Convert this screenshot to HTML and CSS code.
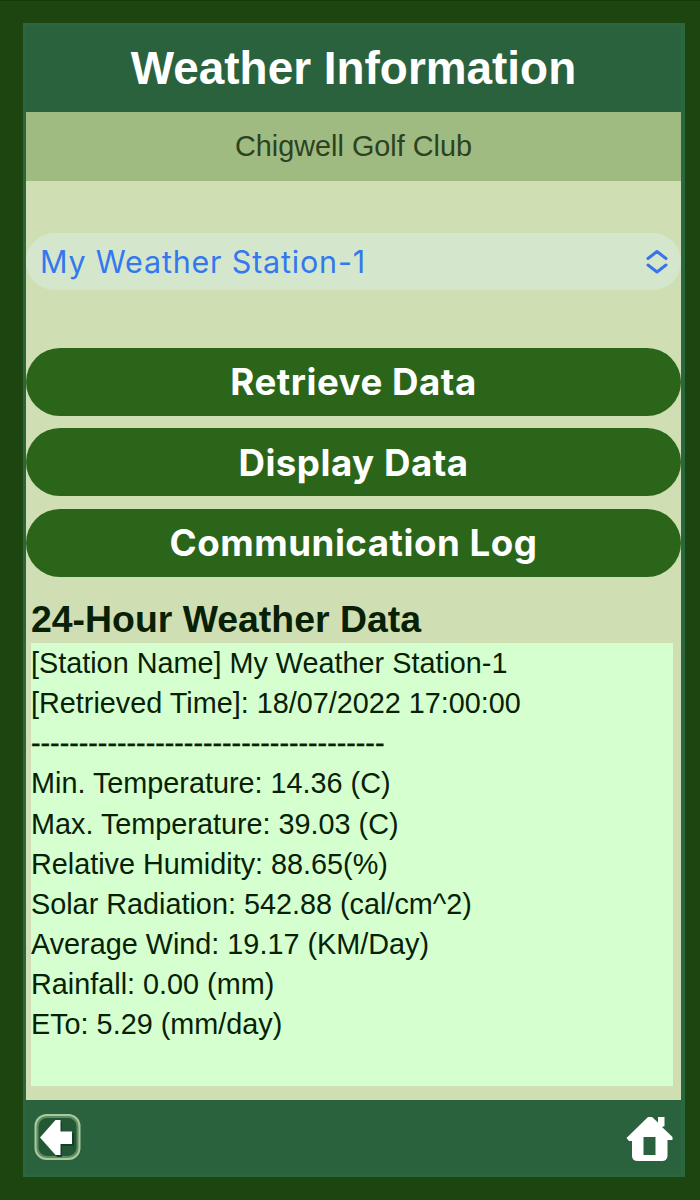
FILE: index.html
```html
<!DOCTYPE html>
<html lang="en">
<head>
    <meta charset="UTF-8">
    <meta name="viewport" content="width=device-width, initial-scale=1.0">
    <title>Weather Information</title>
    <link rel="stylesheet" href="styles.css">
</head>
<body>
    <div class="page">
        <!-- Header Section -->
        <div class="header"><h1>Weather Information</h1></div>
        <div class="club-name"><span>Chigwell Golf Club</span></div>

        <!-- Main Content Section -->
        <div class="content">
            <div class="station-select">
                <span>My Weather Station-1</span>
                <svg class="select-arrows" viewBox="0 0 22 26">
                    <path d="M2 9.500 L11 2.500 L20 9.500 M2 16 L11 23 L20 16"/>
                </svg>
            </div>

            <div class="buttons">
                <button class="retrieve">Retrieve Data</button>
                <button class="display">Display Data</button>
                <button class="log">Communication Log</button>
            </div>

            <h2>24-Hour Weather Data</h2>
            <div class="weather-data">
                <div><span>[Station Name] My Weather Station-1</span></div>
                <div><span>[Retrieved Time]: 18/07/2022 17:00:00</span></div>
                <div class="divider"><span>-------------------------------------</span></div>
                <div><span>Min. Temperature: 14.36 (C)</span></div>
                <div><span>Max. Temperature: 39.03 (C)</span></div>
                <div><span>Relative Humidity: 88.65(%)</span></div>
                <div><span>Solar Radiation: 542.88 (cal/cm^2)</span></div>
                <div><span>Average Wind: 19.17 (KM/Day)</span></div>
                <div><span>Rainfall: 0.00 (mm)</span></div>
                <div><span>ETo: 5.29 (mm/day)</span></div>
            </div>
        </div>

        <!-- Footer Section -->
        <div class="footer">
            <a href="#" aria-label="Back">
                <svg class="icon" viewBox="0 0 48 48">
                    <rect class="back-glow" x="4" y="3.500" width="41" height="41" rx="10"/>
                    <rect class="back-frame" x="2.500" y="2" width="44" height="44" rx="11"/>
                    <path class="back-shadow" d="M10 26 L25 9 H29 V20 H41 V33 H29 V44 H24 Z"/>
                    <path class="back-arrow" d="M7 24.500 L22.500 7 H27.500 V18.500 H39 V31 H27.500 V42 H22.500 Z"/>
                </svg>
            </a>
            <a href="#" aria-label="Home">
                <svg class="icon" viewBox="0 0 48 48">
                    <path class="home" fill-rule="evenodd" d="M22 4 H26 L32 9.500 V4 H38.500 V13 L36 14 L46.500 24 V27 H41.500 V43 Q41 48 36 48 H12 Q6 48 6 43 V28 H3 L0.500 25 Z M17.500 24 V42 H29.500 V24 Z"/>
                </svg>
            </a>
        </div>
    </div>
</body>
</html>
```
FILE: styles.css
```css
* {
    box-sizing: border-box;
}
body {
    font-family: "Liberation Sans", Arial, sans-serif;
    margin: 0;
    padding: 22px 15px 23px 23px;
    height: 1200px;
    background-color: #1c4510;
    border-top: 1px solid #153b0a;
}
.page {
    display: flex;
    flex-direction: column;
    height: 1154px;
    border: 3px solid #2a673f;
    border-right-width: 4px;
    background-color: #cfdfb3;
}
/* Header styles */
.header {
    height: 86px;
    background-color: #2b623e;
    text-align: center;
}
h1 {
    margin: 0;
    color: white;
    font-size: 45.9px;
    line-height: 84px;
}
.club-name {
    height: 69px;
    background-color: #9fbb82;
    color: #2c4220;
    font-size: 28.8px;
    line-height: 69px;
    text-align: center;
}
/* Content styles */
.content {
    flex: 1;
    padding-top: 52px;
}
.station-select {
    display: flex;
    align-items: center;
    justify-content: space-between;
    height: 57px;
    padding: 0 13px 0 14px;
    border-radius: 29px;
    background-color: #d4e7cc;
    color: #3478f0;
    font-family: Inter, sans-serif;
    font-size: 30.5px;
    letter-spacing: 0.8px;
}
.select-arrows {
    width: 22px;
    height: 26px;
    fill: none;
    stroke: #3974ea;
    stroke-width: 3;
    stroke-linecap: round;
    stroke-linejoin: round;
}
.buttons {
    display: flex;
    flex-direction: column;
    gap: 12.5px;
    margin-top: 57.5px;
}
button {
    height: 68px;
    padding: 0;
    border: none;
    border-radius: 34px;
    background-color: #2b6519;
    color: white;
    font-family: Inter, sans-serif;
    font-size: 36.7px;
    font-weight: 700;
    letter-spacing: 0.5px;
}
h2 {
    margin: 0;
    padding: 19px 0 0 5px;
    height: 66.5px;
    color: #082106;
    font-size: 37.4px;
    line-height: 46px;
}
.weather-data {
    height: 443px;
    margin: 0 8px 0 5px;
    background-color: #d5ffcf;
    color: #082106;
    font-size: 28.8px;
    line-height: 40.15px;
    white-space: nowrap;
}
.divider {
    font-size: 28.7px;
    -webkit-text-stroke: 0.4px #082106;
}
/* Footer styles */
.footer {
    display: flex;
    justify-content: space-between;
    height: 74px;
    padding: 13px 7px 0;
    background-color: #2b623e;
}
.icon {
    display: block;
    width: 48px;
    height: 48px;
}
.back-frame {
    fill: none;
    stroke: #a9c99e;
    stroke-width: 2;
}
.back-glow {
    fill: #245735;
    stroke: #5d8c60;
    stroke-width: 3;
}
.back-shadow {
    fill: #173f26;
}
.back-arrow,
.home {
    fill: white;
}
```
